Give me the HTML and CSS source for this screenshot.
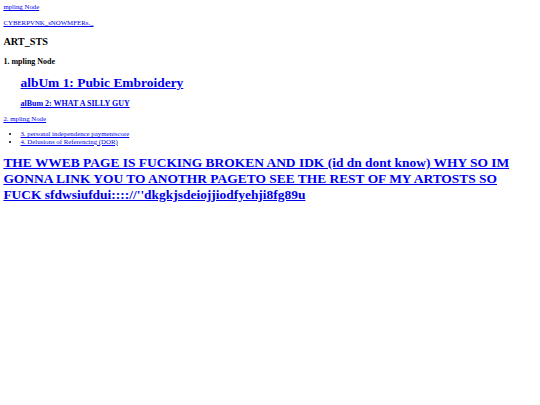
FILE: index.html
```html
<!DOCTYPE html>
<html>
<head>
<meta charset="utf-8">
<title>ART_STS</title>
<link rel="stylesheet" href="styles.css">
</head>
<body class="page">
<a class="link" href="#">mpling Node</a>
<p class="para"><a class="link" href="#">CYBERPVNK_sNOWMFERs._</a></p>
<h2 class="h2">ART_STS</h2>
<h3 class="h3">1. mpling Node</h3>
<div class="albums">
<h1 class="h1 album-main"><a class="link" href="#">albUm 1: Pubic Embroidery</a></h1>
<h3 class="h3 album-sub"><a class="link" href="#">alBum 2: WHAT A SILLY GUY</a></h3>
</div>
<a class="link" href="#">2. mpling Node</a>
<ul class="list">
<li><a class="link" href="#">3. personal independence paymentscore</a></li>
<li><a class="link" href="#">4. Delusions of Referencing (DOR)</a></li>
</ul>
<h1 class="h1"><a class="link" href="#">THE WWEB PAGE IS FUCKING BROKEN AND IDK (id dn dont know) WHY SO IM GONNA LINK YOU TO ANOTHR PAGETO SEE THE REST OF MY ARTOSTS SO FUCK sfdwsiufdui:::://''dkgkjsdeiojjiodfyehji8fg89u</a></h1>
</body>
</html>
```

FILE: styles.css
```css
html { background: #ffffff; }
.page {
  margin: 3.4px;
  font-family: "Liberation Serif", "Times New Roman", serif;
  font-size: 6.83px;
  line-height: 1.15;
  color: #000000;
}
.link { color: #0000ee; text-decoration: underline; }
.para { margin: calc(1em + 1px) 0 1em; }
.h1 { font-size: 1.97em; line-height: 16px; margin: 9.2px 0; font-weight: bold; }
.h2 { font-size: 1.5em; margin: calc(0.83em + 1px) 0 0.83em; font-weight: bold; }
.h3 { font-size: 1.17em; margin: 1em 0; font-weight: bold; }
.albums { padding-left: 2.5em; }
.album-main { margin-bottom: 8.2px; }
.album-sub { margin-bottom: calc(1em - 1px); }
.list { margin: 1em 0; padding-left: 2.5em; list-style: disc; }
```
